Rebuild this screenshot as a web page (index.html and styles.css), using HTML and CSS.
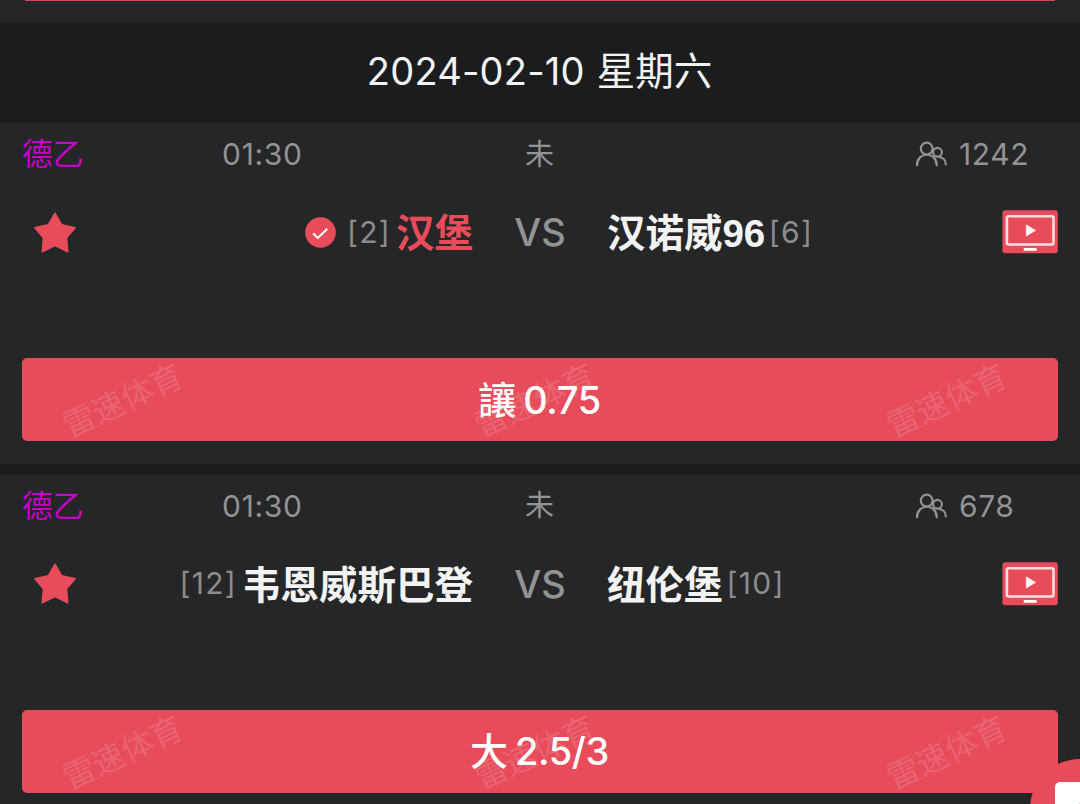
FILE: index.html
```html
<!DOCTYPE html>
<html lang="zh-CN">
<head>
<meta charset="utf-8">
<title>赛程</title>
<link rel="stylesheet" href="styles.css">
</head>
<body>
<svg class="defs" width="0" height="0">
  <symbol id="star" viewBox="0 0 42 41"><path d="M21 1.200 27.600 12.600 41.200 15.700 32.600 25.700 33.800 39.800 21 33.700 8.200 39.800 9.400 25.700 .8 15.700 14.400 12.600Z" fill="#e84c5a" stroke="#e84c5a" stroke-width="1.400" stroke-linejoin="round"/></symbol>
  <symbol id="people" viewBox="0 0 32 26"><g fill="none" stroke="#929394" stroke-width="2.200" stroke-linecap="round"><circle cx="11.700" cy="7.600" r="5.900"/><path d="M2 24.300C2 10.200 21.700 10.200 21.700 24.300"/><circle cx="22.500" cy="11.300" r="4.400"/><path d="M24.300 16.200C28 16.500 30.800 19.500 30.800 23.500"/></g></symbol>
  <symbol id="tv" viewBox="0 0 56 44"><rect x=".4" y=".3" width="55.400" height="43" rx="3" fill="#e84c5a"/><rect x="4.900" y="6.300" width="46.600" height="28.200" rx="1.500" fill="none" stroke="#fbdfe2" stroke-width="2.600"/><path d="M24.300 14.800V26L33.500 20.400Z" fill="#fff" stroke="#fff" stroke-width=".6" stroke-linejoin="round"/><rect x="21.700" y="38" width="13" height="2.800" rx=".8" fill="#fff"/></symbol>
</svg>
<main class="schedule">
  <div class="previous"><div class="previous-bar"></div></div>
  <header class="date"><span class="date-num">2024-02-10</span><span>星期六</span></header>

  <section class="match">
    <div class="meta">
      <span class="league">德乙</span><span class="time">01:30</span><span class="status">未</span>
      <span class="viewers"><svg class="people"><use href="#people"/></svg><span>1242</span></span>
    </div>
    <div class="teams">
      <svg class="star"><use href="#star"/></svg>
      <div class="home">
        <svg class="check" viewBox="0 0 32 32"><circle cx="16" cy="16" r="15.800" fill="#e84c5a"/><path d="M9 17.500 13.200 21.700 22.300 12.800" fill="none" stroke="#fff" stroke-width="2.200" stroke-linecap="round" stroke-linejoin="round"/></svg>
        <span class="rank">[2]</span><span class="name picked">汉堡</span>
      </div>
      <span class="vs">VS</span>
      <div class="away"><span class="name">汉诺威<span class="num">96</span></span><span class="rank">[6]</span></div>
      <svg class="tv"><use href="#tv"/></svg>
    </div>
    <div class="tip"><span class="tip-kind">讓</span><span class="tip-value">0.75</span>
      <span class="mark mark-left">雷速体育</span><span class="mark mark-mid">雷速体育</span><span class="mark mark-right">雷速体育</span>
    </div>
  </section>

  <section class="match">
    <div class="meta">
      <span class="league">德乙</span><span class="time">01:30</span><span class="status">未</span>
      <span class="viewers"><svg class="people"><use href="#people"/></svg><span>678</span></span>
    </div>
    <div class="teams">
      <svg class="star"><use href="#star"/></svg>
      <div class="home"><span class="rank">[12]</span><span class="name">韦恩威斯巴登</span></div>
      <span class="vs">VS</span>
      <div class="away"><span class="name">纽伦堡</span><span class="rank">[10]</span></div>
      <svg class="tv"><use href="#tv"/></svg>
    </div>
    <div class="tip"><span class="tip-kind">大</span><span class="tip-value">2.5/3</span>
      <span class="mark mark-left">雷速体育</span><span class="mark mark-mid">雷速体育</span><span class="mark mark-right">雷速体育</span>
    </div>
  </section>
  <div class="fab"><div class="fab-icon"><i class="fab-dot"></i></div></div>
</main>
</body>
</html>
```
FILE: styles.css
```css
* { box-sizing: border-box; }
body { margin: 0; background: #1b1c1e; font-family: Inter, "Noto Sans CJK SC", sans-serif; }
.defs { position: absolute; }
.schedule { position: relative; width: 1080px; height: 804px; overflow: hidden; color: #f3f3f4; }
.previous { height: 23px; background: #252628; }
.previous-bar { height: 1px; margin: 0 25px; background: #d84854; }
.date { height: 100px; display: flex; justify-content: center; align-items: center; gap: 12px; padding: 0 1px 4px 0; font-size: 38.500px; line-height: 50px; }
.date-num { font-size: 38px; letter-spacing: .2px; }
.match { height: 340.600px; margin-bottom: 11px; padding: 0 22px; background: #252628; overflow: hidden; }
.meta { display: grid; grid-template-columns: 200px 303px 390px 1fr; height: 62px; align-items: center; font-size: 30px; line-height: 40px; color: #929394; }
.league { font-size: 30.800px; color: #c800c8; }
.time { letter-spacing: .7px; }
.status { padding-top: 1px; font-size: 29px; }
.viewers { display: flex; align-items: center; gap: 12px; letter-spacing: .6px; }
.people { width: 32px; height: 26px; }
.teams { display: grid; grid-template-columns: 66px 384px 136px 384px 1fr; align-items: center; height: 94px; }
.star { width: 42px; height: 41px; margin-left: 12px; }
.home, .away { display: flex; align-items: center; white-space: nowrap; line-height: 50px; }
.home { justify-content: flex-end; gap: 5px; margin-right: -1px; }
.away { gap: 4px; margin-left: -1px; }
.check { width: 31px; height: 31px; margin-right: 6px; }
.rank { padding-bottom: 1px; font-size: 30px; font-weight: 400; letter-spacing: 1.300px; color: #8b8c8d; }
.name { padding-top: 2px; font-size: 38.500px; font-weight: 700; }
.num { font-family: "Liberation Sans", Arial, sans-serif; font-size: 38.500px; letter-spacing: -.3px; }
.picked { color: #e84c5a; }
.vs { text-align: center; font-size: 38px; font-weight: 450; color: #929394; }
.tv { width: 56px; height: 44px; justify-self: end; }
.tip { position: relative; display: flex; justify-content: center; align-items: center; gap: 7px; height: 83px; margin-top: 79px; padding-right: 1px; border-radius: 5px; background: #e84c5a; color: #fff; font-size: 38px; font-weight: 500; line-height: 50px; }
.tip-value { letter-spacing: -.4px; }
.mark { position: absolute; top: 23px; width: 136px; text-align: center; font-size: 32px; font-weight: 400; line-height: 40px; color: rgba(255, 255, 255, .15); transform: rotate(-25deg); }
.mark-left { left: 33px; }
.mark-mid { left: 445px; }
.mark-right { left: 857px; }
.fab { position: absolute; left: 1030px; top: 759px; width: 100px; height: 100px; border-radius: 50%; background: #e84c5a; }
.fab-icon { position: relative; width: 50px; height: 50px; margin: 23px 0 0 25px; border-radius: 5px; background: #fff; overflow: hidden; }
.fab-dot { position: absolute; left: 22px; top: 20px; width: 14px; height: 14px; border-radius: 50%; background: #e84c5a; }
```
